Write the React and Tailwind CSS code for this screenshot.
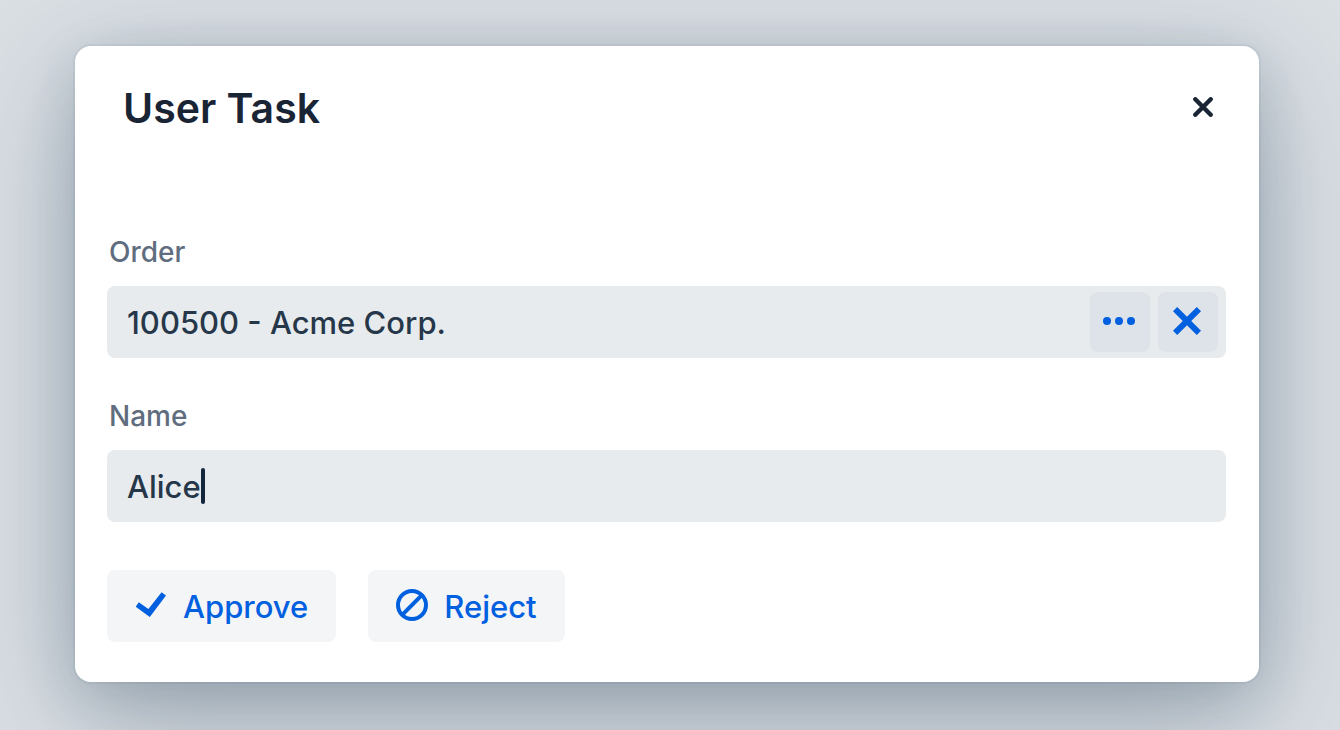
function EllipsisIcon() {
  return (
    <svg width="32" height="8" viewBox="0 0 32 8" fill="currentColor" aria-hidden="true">
      <circle cx="4" cy="4" r="4" />
      <circle cx="16" cy="4" r="4" />
      <circle cx="28" cy="4" r="4" />
    </svg>
  );
}

function ClearIcon() {
  return (
    <svg width="28" height="28" viewBox="0 0 28 28" fill="currentColor" aria-hidden="true">
      <path d="M4.2 0 14 9.8 23.8 0 28 4.2 18.2 14 28 23.8 23.8 28 14 18.2 4.2 28 0 23.8 9.8 14 0 4.2Z" />
    </svg>
  );
}

function CloseIcon() {
  return (
    <svg width="20" height="20" viewBox="0 0 20 20" fill="none" stroke="currentColor" strokeWidth="4.4" strokeLinecap="round" aria-hidden="true">
      <path d="M2.3 2.3 17.7 17.7M17.7 2.3 2.3 17.7" />
    </svg>
  );
}

function CheckIcon() {
  return (
    <svg width="32" height="32" viewBox="0 0 32 32" fill="currentColor" aria-hidden="true">
      <path d="M3.8 12.2 13.4 19 26.6 2.2 31 5.6 14.8 27 .7 16.8Z" />
    </svg>
  );
}

function BanIcon() {
  return (
    <svg width="32" height="34" viewBox="0 0 32 34" fill="none" stroke="currentColor" strokeWidth="4" aria-hidden="true">
      <circle cx="16" cy="16" r="14" />
      <path d="M6.4 25.6 25.6 6.4" />
    </svg>
  );
}

const fieldClass = "flex h-[72px] items-center rounded-lg bg-[#e7ebee] pl-5 pr-2";
const inputClass = "h-full bg-transparent text-[31px] font-medium text-[#26374a] outline-none";
const labelClass = "flex h-9 items-center px-0.5 text-[28px] font-medium text-[#5f6d7e]";
const fieldButtonClass = "flex size-[60px] shrink-0 items-center justify-center rounded-lg bg-[#dee2e9] text-[#0060df] pr-0.5 pb-0.5";
const actionClass = "flex h-[72px] items-center gap-4 rounded-lg bg-[#f3f5f7] px-7 text-[31px] font-medium text-[#0060df]";

export default function App() {
  return (
    <main className="min-h-screen bg-[#dadfe4] pt-[46px] pr-[81px] pb-12 pl-[75px] font-['Inter',sans-serif]">
      <section
        role="dialog"
        aria-labelledby="dialog-title"
        className="rounded-2xl bg-white pr-[33px] pb-10 pl-8 shadow-[0_0_0_2px_rgba(26,57,96,0.05),0_12px_48px_rgba(26,54,80,0.14),0_36px_120px_rgba(24,50,76,0.32)]"
      >
        <header className="flex h-[122px] items-center justify-between pr-[3px] pl-4">
          <h1 id="dialog-title" className="pt-1 text-[41px] font-semibold text-[#192434]">User Task</h1>
          <button type="button" aria-label="Close" className="flex size-10 items-center justify-center text-[#192434]">
            <CloseIcon />
          </button>
        </header>

        <form className="pt-[66px]">
          <label htmlFor="order" className={labelClass}>Order</label>
          <div className={`${fieldClass} mt-4 gap-2`}>
            <input id="order" type="text" defaultValue="100500 - Acme Corp." className={`${inputClass} min-w-0 flex-1`} />
            <button type="button" aria-label="Select order" className={fieldButtonClass}><EllipsisIcon /></button>
            <button type="button" aria-label="Clear order" className={fieldButtonClass}><ClearIcon /></button>
          </div>

          <label htmlFor="name" className={`${labelClass} mt-10`}>Name</label>
          <div className={`${fieldClass} mt-4`}>
            <input id="name" type="text" defaultValue="Alice" className={`${inputClass} field-sizing-content`} />
            <span className="h-9 w-1 rounded-sm bg-[#14263c]" aria-hidden="true" />
          </div>

          <div className="mt-12 flex gap-8">
            <button type="button" className={actionClass}><CheckIcon /><span className="pt-0.5">Approve</span></button>
            <button type="button" className={actionClass}><BanIcon /><span className="pt-0.5">Reject</span></button>
          </div>
        </form>
      </section>
    </main>
  );
}
